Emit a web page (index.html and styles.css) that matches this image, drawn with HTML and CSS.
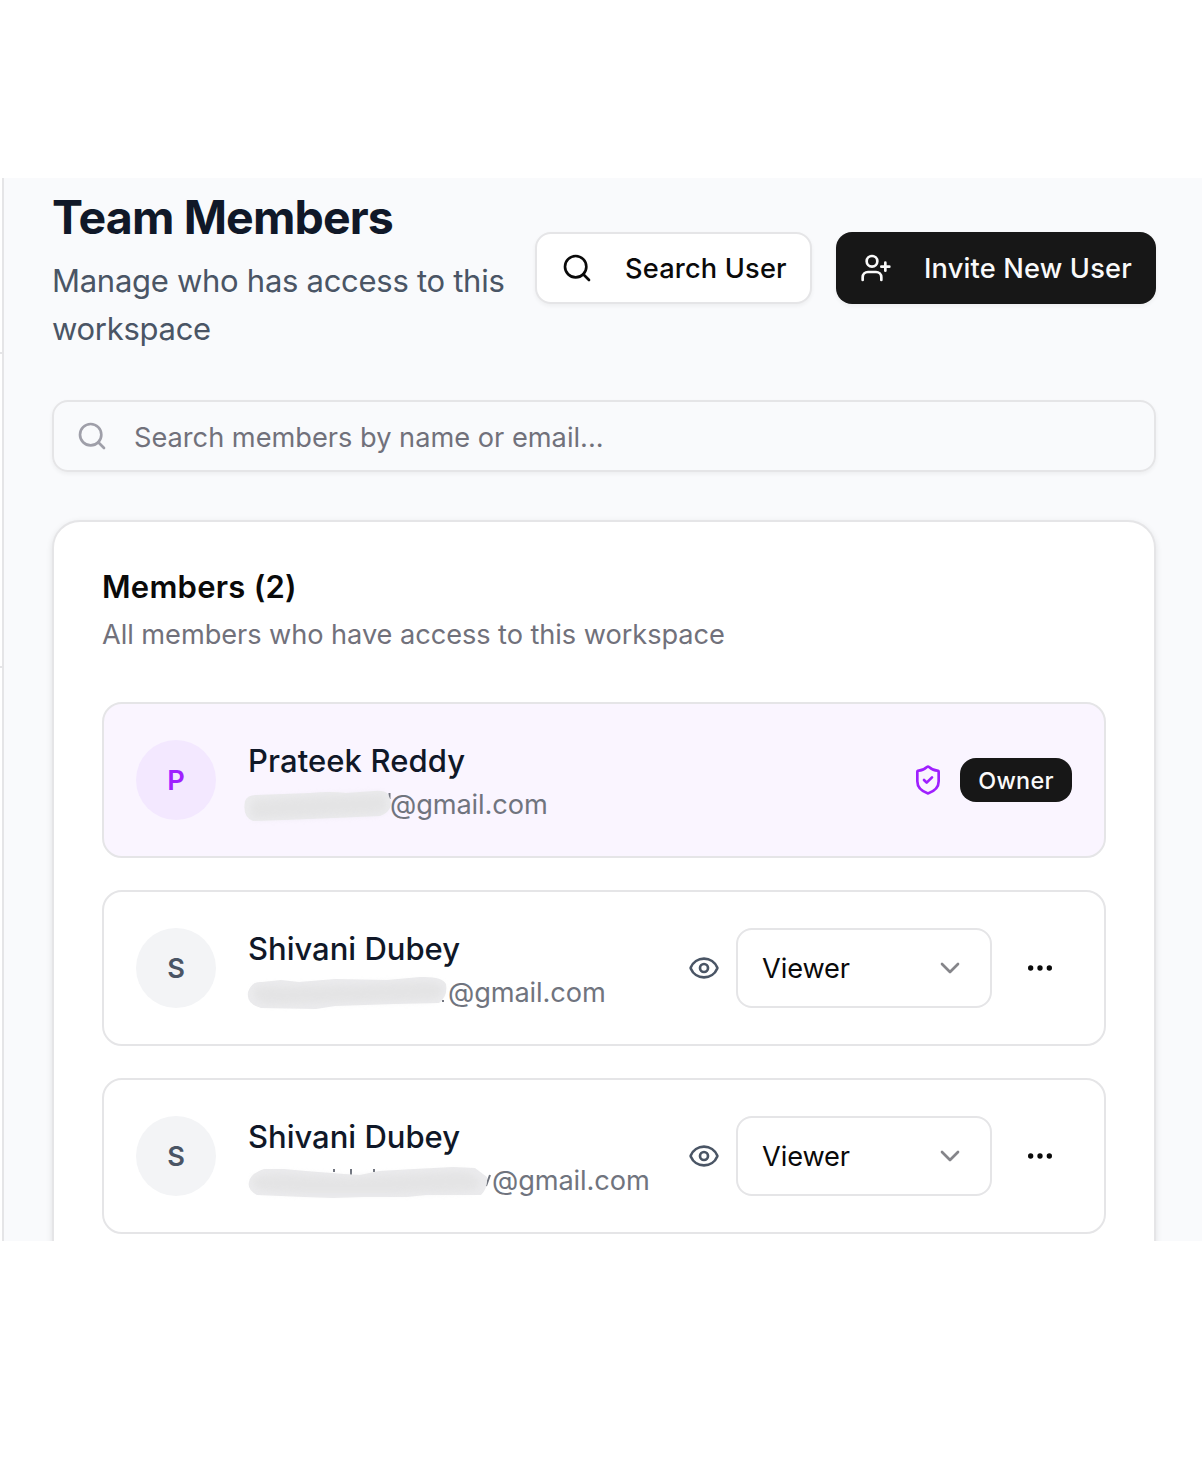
FILE: index.html
```html
<!DOCTYPE html>
<html lang="en">
<head>
    <meta charset="UTF-8">
    <meta name="viewport" content="width=device-width, initial-scale=1.0">
    <title>Team Members</title>
    <link rel="stylesheet" href="styles.css">
</head>
<body>
    <div class="app">
        <aside class="sidebar">
            <div class="sidebar-top"></div>
            <div class="sidebar-middle"></div>
        </aside>

        <main class="content">
            <header class="page-header">
                <div class="heading">
                    <h1>Team Members</h1>
                    <p>Manage who has access to this workspace</p>
                </div>
                <div class="actions">
                    <button class="btn btn-outline">
                        <svg class="icon" viewBox="0 0 24 24"><circle cx="11" cy="11" r="8"/><path d="m21 21-4.3-4.3"/></svg>
                        <span>Search User</span>
                    </button>
                    <button class="btn btn-dark">
                        <svg class="icon" viewBox="0 0 24 24"><path d="M16 21v-2a4 4 0 0 0-4-4H6a4 4 0 0 0-4 4v2"/><circle cx="9" cy="7" r="4"/><path d="M19 8v6M22 11h-6"/></svg>
                        <span>Invite New User</span>
                    </button>
                </div>
            </header>

            <div class="search">
                <svg class="icon" viewBox="0 0 24 24"><circle cx="11" cy="11" r="8"/><path d="m21 21-4.3-4.3"/></svg>
                <span>Search members by name or email...</span>
            </div>

            <section class="card">
                <h2>Members (2)</h2>
                <p class="description">All members who have access to this workspace</p>

                <div class="members">
                    <div class="member owner">
                        <div class="avatar">P</div>
                        <div class="info">
                            <div class="name">Prateek Reddy</div>
                            <div class="email">
                                <svg class="smudge smudge-one" viewBox="0 0 150 40">
                                    <path class="smudge-mark" d="M147.500 9v6"/>
                                    <path class="smudge-edge" d="M3 17Q5 11 14 11L68 9Q88 7 104 9L132 7Q142 6 146 10Q149 15 149 21Q147 29 138 32L92 34L42 36L11 37Q0 33 3 17Z"/>
                                    <path class="smudge-core" d="M12 16L83 12L139 10Q146 14 144 25Q140 30 120 30L51 33L14 34Q5 30 12 16Z"/>
                                </svg>
                                <span>@gmail.com</span>
                            </div>
                        </div>
                        <div class="controls">
                            <svg class="icon role-icon" viewBox="0 0 24 24"><path d="M20 13c0 5-3.5 7.5-7.66 8.95a1 1 0 0 1-.67-.01C7.5 20.5 4 18 4 13V6a1 1 0 0 1 1-1c2 0 4.500-1.200 6.240-2.720a1.170 1.170 0 0 1 1.520 0C14.510 3.810 17 5 19 5a1 1 0 0 1 1 1z"/><path d="m9 12 2 2 4-4"/></svg>
                            <span class="badge">Owner</span>
                        </div>
                    </div>

                    <div class="member">
                        <div class="avatar">S</div>
                        <div class="info">
                            <div class="name">Shivani Dubey</div>
                            <div class="email">
                                <svg class="smudge smudge-two" viewBox="0 0 205 40">
                                    <path class="smudge-mark" d="M199 28v2"/>
                                    <path class="smudge-edge" d="M4 20Q8 9 18 10L37 8L55 10L91 7L143 8L176 5Q198 4 202 12Q204 24 195 31L150 32L91 34L72 37L17 36Q2 32 4 20Z"/>
                                    <path class="smudge-core" d="M12 16Q20 13 40 15L105 13L180 10Q197 9 199 17Q198 27 184 28L102 30L23 32Q5 27 12 16Z"/>
                                </svg>
                                <span>@gmail.com</span>
                            </div>
                        </div>
                        <div class="controls">
                            <svg class="icon role-icon" viewBox="0 0 24 24"><path d="M2.062 12.348a1 1 0 0 1 0-.696 10.750 10.750 0 0 1 19.876 0 1 1 0 0 1 0 .696 10.750 10.750 0 0 1-19.876 0"/><circle cx="12" cy="12" r="3"/></svg>
                            <div class="select"><span>Viewer</span><svg class="icon chevron" viewBox="0 0 24 24"><path d="m6 9 6 6 6-6"/></svg></div>
                            <button class="more"><svg class="icon" viewBox="0 0 24 24"><circle cx="12" cy="12" r="1"/><circle cx="19" cy="12" r="1"/><circle cx="5" cy="12" r="1"/></svg></button>
                        </div>
                    </div>

                    <div class="member">
                        <div class="avatar">S</div>
                        <div class="info">
                            <div class="name">Shivani Dubey</div>
                            <div class="email">
                                <svg class="smudge smudge-three" viewBox="0 0 250 40">
                                    <path class="smudge-mark" d="M246 15L242 26M90 9v3M107 9v6M130 9v3"/>
                                    <path class="smudge-edge" d="M5 22Q6 14 20 9L40 9L62 11L100 14L116 15L135 11L170 9L209 7L231 8L243 17Q244 28 237 35L182 35L163 37L120 37L89 38L60 37L13 35Q3 30 5 22Z"/>
                                    <path class="smudge-core" d="M11 17Q35 12 55 15L105 18L150 15L212 12Q232 11 236 23Q234 31 219 31L146 33L60 33L20 31Q5 27 11 17Z"/>
                                </svg>
                                <span>@gmail.com</span>
                            </div>
                        </div>
                        <div class="controls">
                            <svg class="icon role-icon" viewBox="0 0 24 24"><path d="M2.062 12.348a1 1 0 0 1 0-.696 10.750 10.750 0 0 1 19.876 0 1 1 0 0 1 0 .696 10.750 10.750 0 0 1-19.876 0"/><circle cx="12" cy="12" r="3"/></svg>
                            <div class="select"><span>Viewer</span><svg class="icon chevron" viewBox="0 0 24 24"><path d="m6 9 6 6 6-6"/></svg></div>
                            <button class="more"><svg class="icon" viewBox="0 0 24 24"><circle cx="12" cy="12" r="1"/><circle cx="19" cy="12" r="1"/><circle cx="5" cy="12" r="1"/></svg></button>
                        </div>
                    </div>
                </div>
            </section>
        </main>
    </div>
</body>
</html>
```
FILE: styles.css
```css
* {
    box-sizing: border-box;
}
body {
    font-family: 'Inter', sans-serif;
    margin: 0;
    padding: 178px 0 223px;
    background-color: #ffffff;
    color: #0a0a0a;
}
h1, h2, p {
    margin: 0;
}
button {
    font-family: inherit;
    border: none;
    padding: 0;
}
.app {
    display: flex;
    height: 1063px;
    overflow: hidden;
    background-color: #f9fafc;
}
.sidebar {
    width: 4px;
    flex-shrink: 0;
    background: #ffffff;
    border-right: 2px solid #e5e5e7;
}
.sidebar-top {
    height: 176px;
    border-bottom: 2px solid #e5e5e7;
}
.sidebar-middle {
    height: 314px;
    border-bottom: 2px solid #e5e5e7;
}
.content {
    flex: 1;
    padding: 6px 46px 0 48px;
}
.icon {
    width: 32px;
    height: 32px;
    flex-shrink: 0;
    fill: none;
    stroke: currentColor;
    stroke-width: 2;
    stroke-linecap: round;
    stroke-linejoin: round;
}

.page-header {
    display: flex;
    align-items: center;
    justify-content: space-between;
    height: 168px;
    margin-bottom: 48px;
}
.heading {
    width: 470px;
}
.heading h1 {
    padding-top: 2px;
    font-size: 46.5px;
    line-height: 64px;
    font-weight: 700;
    letter-spacing: -0.87px;
    color: #101828;
}
.heading p {
    margin-top: 8px;
    font-size: 31px;
    line-height: 48px;
    letter-spacing: -0.28px;
    color: #4a5565;
}
.actions {
    display: flex;
    gap: 24px;
}
.btn {
    display: flex;
    align-items: center;
    gap: 32px;
    height: 72px;
    padding: 0 24px;
    border-radius: 16px;
    font-size: 27.2px;
    font-weight: 500;
    letter-spacing: 0.18px;
    white-space: nowrap;
    box-shadow: 0 2px 4px rgba(0, 0, 0, 0.05);
}
.btn span {
    padding-top: 1px;
}
.btn-outline {
    width: 277px;
    background: #ffffff;
    border: 2px solid #e5e5e7;
    color: #0a0a0a;
}
.btn-dark {
    width: 320px;
    background: #171717;
    color: #fafafa;
}

.search {
    display: flex;
    align-items: center;
    gap: 26px;
    height: 72px;
    margin-bottom: 48px;
    padding: 0 22px;
    border: 2px solid #e5e5e7;
    border-radius: 16px;
    font-size: 27.2px;
    color: #71717b;
    box-shadow: 0 2px 4px rgba(0, 0, 0, 0.05);
}
.search span {
    padding-top: 2px;
}
.search .icon {
    color: #9f9fa9;
}

.card {
    height: 800px;
    padding: 48px;
    background: #ffffff;
    border: 2px solid #e5e5e7;
    border-radius: 28px;
    box-shadow: 0 2px 6px rgba(0, 0, 0, 0.1);
}
.card h2 {
    padding-top: 1px;
    font-size: 31px;
    line-height: 32px;
    font-weight: 600;
    letter-spacing: 0.25px;
}
.description {
    margin: 12px 0 47px;
    font-size: 27.2px;
    line-height: 40px;
    letter-spacing: -0.06px;
    color: #71717b;
}
.members {
    display: flex;
    flex-direction: column;
    gap: 32px;
}
.member {
    display: flex;
    align-items: center;
    height: 156px;
    padding: 32px;
    border: 2px solid #e5e5e7;
    border-radius: 20px;
}
.avatar {
    width: 80px;
    height: 80px;
    margin-right: 32px;
    border-radius: 50%;
    background: #f3f4f6;
    color: #4a5565;
    font-size: 27.2px;
    font-weight: 600;
    line-height: 81px;
    text-align: center;
}
.name {
    height: 48px;
    padding-top: 1px;
    font-size: 31px;
    line-height: 48px;
    font-weight: 500;
    letter-spacing: 0;
    color: #101828;
}
.email {
    display: flex;
    height: 40px;
    font-size: 27.2px;
    line-height: 41px;
    letter-spacing: -0.1px;
    color: #70747e;
}

/* scribble that hides the first part of each address */
.smudge {
    height: 40px;
    flex-shrink: 0;
    overflow: visible;
}
.smudge-mark {
    fill: none;
    stroke: #70747e;
    stroke-width: 2;
}
.smudge-edge {
    fill: #ebebed;
    filter: blur(0.6px);
}
.smudge-core {
    fill: #e4e4e5;
    filter: blur(3px);
}
.smudge-one {
    width: 150px;
    margin: 0 -2px 0 -6px;
}
.smudge-two {
    width: 205px;
    margin: 0 -1px 0 -4px;
}
.smudge-three {
    width: 250px;
    margin: 0 -2px 0 -4px;
}

.controls {
    display: flex;
    align-items: center;
    gap: 16px;
    margin-left: auto;
}
.role-icon {
    color: #4a5565;
}
.select {
    display: flex;
    align-items: center;
    justify-content: space-between;
    width: 256px;
    height: 80px;
    padding: 0 24px;
    border: 2px solid #e5e5e7;
    border-radius: 16px;
    font-size: 27.2px;
    letter-spacing: -0.1px;
}
.select span {
    padding-top: 1px;
}
.chevron {
    color: #85858a;
}
.more {
    display: flex;
    align-items: center;
    justify-content: center;
    width: 64px;
    height: 64px;
    background: none;
    color: #0a0a0a;
}

.owner {
    background: #faf5ff;
}
.owner .avatar {
    background: #f3e8ff;
    color: #9f20ff;
}
.owner .name {
    letter-spacing: 0.1px;
}
.owner .role-icon {
    color: #9f20ff;
}
.badge {
    width: 112px;
    height: 44px;
    border-radius: 16px;
    background: #171717;
    color: #fafafa;
    font-size: 23.4px;
    font-weight: 500;
    letter-spacing: 0.3px;
    line-height: 45px;
    text-align: center;
}
```
